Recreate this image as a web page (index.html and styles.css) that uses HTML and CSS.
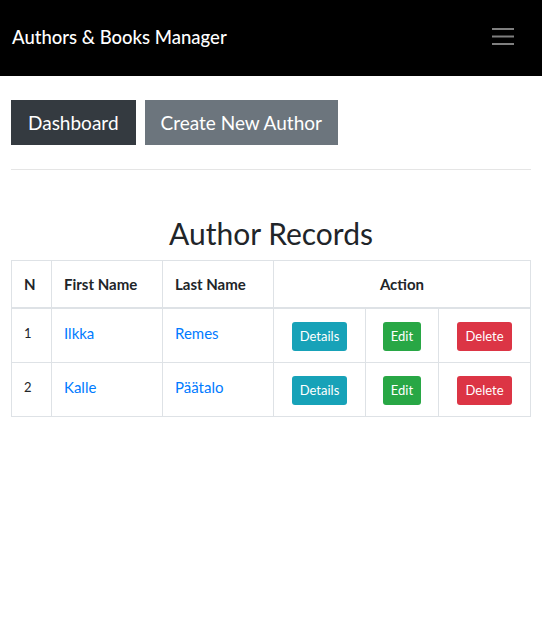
FILE: index.html
```html
<!DOCTYPE html>
<html>
<head>
<meta charset="utf-8">
<link rel="stylesheet" href="styles.css">
</head>
<body>
<nav class="navbar">
  <span class="brand">Authors &amp; Books Manager</span>
  <span class="toggler">
    <svg width="22" height="17" viewBox="0 0 22 17"><g stroke="#7f7f7f" stroke-width="2"><line x1="0" y1="1" x2="22" y2="1"/><line x1="0" y1="8.5" x2="22" y2="8.5"/><line x1="0" y1="16" x2="22" y2="16"/></g></svg>
  </span>
</nav>
<main class="content">
  <div class="toolbar">
    <a class="btn-lg dark">Dashboard</a>
    <a class="btn-lg secondary">Create New Author</a>
  </div>
  <hr class="rule">
  <h2 class="title">Author Records</h2>
  <table class="records">
    <colgroup>
      <col class="c-n"><col class="c-name"><col class="c-name"><col class="c-btn"><col class="c-edit"><col class="c-btn">
    </colgroup>
    <thead>
      <tr><th>N</th><th>First Name</th><th>Last Name</th><th colspan="3" class="center">Action</th></tr>
    </thead>
    <tbody>
      <tr>
        <td class="num">1</td><td><a class="link">Ilkka</a></td><td><a class="link">Remes</a></td>
        <td class="action"><a class="btn-sm info">Details</a></td>
        <td class="action"><a class="btn-sm success">Edit</a></td>
        <td class="action"><a class="btn-sm danger">Delete</a></td>
      </tr>
      <tr>
        <td class="num">2</td><td><a class="link">Kalle</a></td><td><a class="link">Päätalo</a></td>
        <td class="action"><a class="btn-sm info">Details</a></td>
        <td class="action"><a class="btn-sm success">Edit</a></td>
        <td class="action"><a class="btn-sm danger">Delete</a></td>
      </tr>
    </tbody>
  </table>
</main>
</body>
</html>
```
FILE: styles.css
```css
* { box-sizing: border-box; }
body {
  margin: 0;
  font-family: Lato, "Open Sans", sans-serif;
  color: #212529;
  background: #fff;
}
.navbar {
  height: 76px;
  background: #000;
  display: flex;
  align-items: center;
  justify-content: space-between;
  padding: 0 28px 3px 12px;
}
.brand {
  color: #fff;
  font-size: 18.5px;
  font-weight: 500;
}
.toggler { display: flex; align-items: center; }
.content { padding: 24px 11px 0 11px; }
.toolbar { display: flex; gap: 9px; }
.btn-lg {
  display: inline-flex;
  align-items: center;
  height: 45px;
  padding: 0 17px;
  font-size: 19px;
  color: #fff;
}
.dark { background: #343a40; }
.secondary { background: #6c757d; padding: 0 16px; }
.rule {
  margin: 24px 0 0 0;
  border: 0;
  border-top: 1px solid rgba(0,0,0,0.1);
}
.title {
  margin: 45px 0 9px 0;
  text-align: center;
  font-size: 30px;
  font-weight: 400;
  line-height: 36px;
}
.records {
  width: 520px;
  border-collapse: collapse;
  font-size: 15px;
  line-height: 24px;
}
.c-n { width: 40px; }
.c-name { width: 111px; }
.c-btn { width: 92px; }
.c-edit { width: 73px; }
.records th, .records td {
  border: 1px solid #dee2e6;
  padding: 12px;
  text-align: left;
  vertical-align: top;
}
.records th {
  line-height: 22px;
  font-weight: 700;
  border-bottom: 2px solid #dee2e6;
}
.records td { height: 54px; }
.records .center { text-align: center; }
.records .action { text-align: center; padding: 13px 12px 11px; }
.num { font-size: 13px; }
.link { color: #007bff; }
.btn-sm {
  display: inline-block;
  height: 29px;
  line-height: 29px;
  padding: 0 8px;
  font-size: 13px;
  color: #fff;
  border-radius: 3px;
}
.info { background: #17a2b8; }
.success { background: #28a745; }
.danger { background: #dc3545; }
```
